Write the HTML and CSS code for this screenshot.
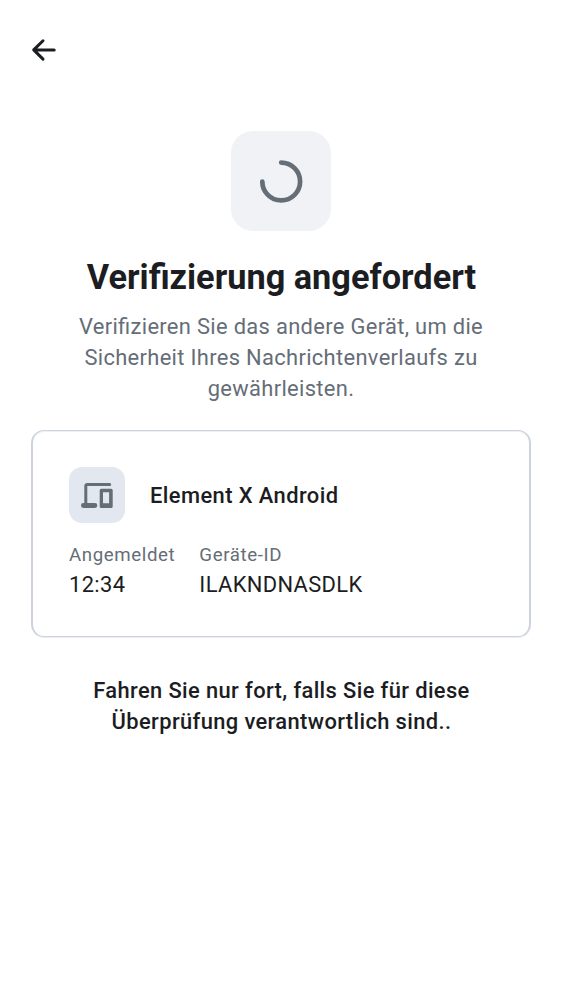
FILE: index.html
```html
<!DOCTYPE html>
<html lang="de">
<head>
<meta charset="utf-8">
<title>Verifizierung angefordert</title>
<link rel="stylesheet" href="styles.css">
</head>
<body>
<header class="topbar">
<svg class="back" viewBox="0 0 32 32"><path d="M15 6.800 5.700 15.900 15 25.100M6.500 15.900H26.200"/></svg>
</header>
<main class="content">
<div class="hero"><svg class="spinner" viewBox="0 0 50 50"><path d="M25.200 6.600A18.900 18.900 0 1 1 6.300 25.500"/></svg></div>
<h1 class="title"><span class="line">Verifizierung angefordert</span></h1>
<p class="subtitle"><span class="line">Verifizieren Sie das andere Gerät, um die</span><span class="line">Sicherheit Ihres Nachrichtenverlaufs zu</span><span class="line">gewährleisten.</span></p>
<section class="card">
<div class="device">
<div class="device-icon"><svg viewBox="0 0 32 32"><path class="frame" d="M4.800 25V7a1.600 1.600 0 0 1 1.600-1.600H28.700"/><rect y="24" width="16.300" height="5" rx="2.400"/><path fill-rule="evenodd" d="M20.200 9.700h10a1.500 1.500 0 0 1 1.500 1.500v16.300a1.500 1.500 0 0 1-1.500 1.500h-10a1.500 1.500 0 0 1-1.500-1.500V11.200a1.500 1.500 0 0 1 1.500-1.500zM22 13.200V24.300h6.100V13.200z"/></svg></div>
<div class="device-name">Element X Android</div>
</div>
<dl class="details">
<div><dt>Angemeldet</dt><dd>12:34</dd></div>
<div><dt>Geräte-ID</dt><dd>ILAKNDNASDLK</dd></div>
</dl>
</section>
<p class="notice"><span class="line">Fahren Sie nur fort, falls Sie für diese</span><span class="line">Überprüfung verantwortlich sind..</span></p>
</main>
</body>
</html>
```
FILE: styles.css
```css
* { box-sizing: border-box; }
body { margin: 0; min-height: 1000px; background: #fff; color: #1b1d22; font-family: Roboto, sans-serif; }
h1, p, dl, dd { margin: 0; }
.topbar { height: 100px; padding: 34px 28px; }
.back { display: block; width: 32px; height: 32px; fill: none; stroke: #1b1d22; stroke-width: 3; stroke-linecap: round; stroke-linejoin: round; }
.content { padding: 31px 31px 0; }
.hero { display: grid; place-items: center; width: 100px; height: 100px; margin: 0 auto; border-radius: 22px; background: #f0f2f5; }
.spinner { width: 50px; height: 50px; fill: none; stroke: #656d77; stroke-width: 4.7; stroke-linecap: round; }
.line { display: block; white-space: nowrap; }
.title { margin-top: 25px; padding-left: 1px; font-size: 34.3px; line-height: 43px; font-weight: 700; text-align: center; }
.subtitle { margin-top: 12px; font-size: 21.9px; line-height: 31.2px; letter-spacing: .33px; font-feature-settings: "liga" 1; text-align: center; color: #656d77; }
.card { height: 207px; margin-top: 25px; padding: 36px; border: solid #cdd3de; border-width: 1px 2px; border-radius: 13px; box-shadow: inset 0 1px #cdd3de55, 0 1px #cdd3de66; }
.device { display: flex; align-items: center; gap: 25px; }
.device-icon { display: grid; place-items: center; width: 56px; height: 56px; border-radius: 13px; background: #e3e7f0; }
.device-icon svg { width: 32px; height: 32px; fill: #656d77; }
.device-icon .frame { fill: none; stroke: #656d77; stroke-width: 3; stroke-linecap: round; }
.device-name { padding-top: 2px; font-size: 21.9px; font-weight: 500; letter-spacing: .42px; }
.details { display: flex; gap: 24px; margin-top: 18px; }
.details dt { font-size: 18.7px; line-height: 28px; letter-spacing: .6px; color: #656d77; }
.details dd { font-size: 21.9px; line-height: 31px; letter-spacing: .36px; }
.notice { margin-top: 38px; padding-left: 1px; font-size: 21.9px; line-height: 31.2px; font-weight: 500; letter-spacing: .38px; font-feature-settings: "liga" 1; text-align: center; }
```
